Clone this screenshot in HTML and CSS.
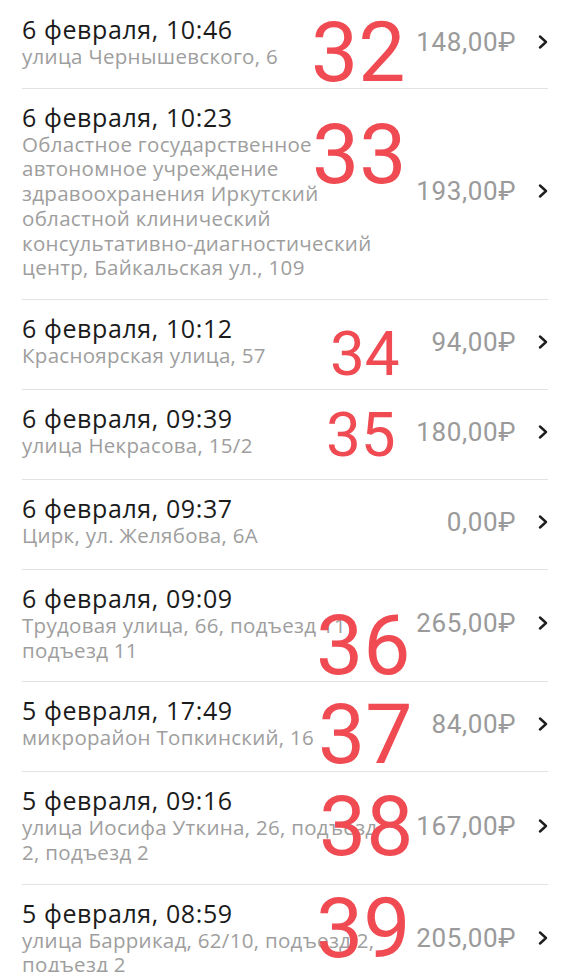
FILE: index.html
```html
<!DOCTYPE html>
<html lang="ru">
<head>
<meta charset="utf-8">
<title>Поездки</title>
<link rel="stylesheet" href="styles.css">
</head>
<body>
<ul class="trips">
  <li class="trip">
    <div class="info"><div class="date">6 февраля, 10:46</div><div class="addr">улица Чернышевского, 6</div></div>
    <div class="price">148,00₽</div>
    <svg class="chev" viewBox="0 0 10 14"><polyline points="2,1.5 8,7 2,12.5"/></svg>
    <span class="mark m32">32</span>
  </li>
  <li class="trip">
    <div class="info"><div class="date">6 февраля, 10:23</div><div class="addr">Областное государственное автономное учреждение здравоохранения Иркутский областной клинический консультативно-диагностический центр, Байкальская ул., 109</div></div>
    <div class="price">193,00₽</div>
    <svg class="chev" viewBox="0 0 10 14"><polyline points="2,1.5 8,7 2,12.5"/></svg>
    <span class="mark m33">33</span>
  </li>
  <li class="trip">
    <div class="info"><div class="date">6 февраля, 10:12</div><div class="addr">Красноярская улица, 57</div></div>
    <div class="price">94,00₽</div>
    <svg class="chev" viewBox="0 0 10 14"><polyline points="2,1.5 8,7 2,12.5"/></svg>
    <span class="mark small m34">34</span>
  </li>
  <li class="trip">
    <div class="info"><div class="date">6 февраля, 09:39</div><div class="addr">улица Некрасова, 15/2</div></div>
    <div class="price">180,00₽</div>
    <svg class="chev" viewBox="0 0 10 14"><polyline points="2,1.5 8,7 2,12.5"/></svg>
    <span class="mark small m35">35</span>
  </li>
  <li class="trip">
    <div class="info"><div class="date">6 февраля, 09:37</div><div class="addr">Цирк, ул. Желябова, 6А</div></div>
    <div class="price">0,00₽</div>
    <svg class="chev" viewBox="0 0 10 14"><polyline points="2,1.5 8,7 2,12.5"/></svg>
  </li>
  <li class="trip">
    <div class="info"><div class="date">6 февраля, 09:09</div><div class="addr">Трудовая улица, 66, подъезд 11 подъезд 11</div></div>
    <div class="price">265,00₽</div>
    <svg class="chev" viewBox="0 0 10 14"><polyline points="2,1.5 8,7 2,12.5"/></svg>
    <span class="mark m36">36</span>
  </li>
  <li class="trip">
    <div class="info"><div class="date">5 февраля, 17:49</div><div class="addr">микрорайон Топкинский, 16</div></div>
    <div class="price">84,00₽</div>
    <svg class="chev" viewBox="0 0 10 14"><polyline points="2,1.5 8,7 2,12.5"/></svg>
    <span class="mark m37">37</span>
  </li>
  <li class="trip">
    <div class="info"><div class="date">5 февраля, 09:16</div><div class="addr">улица Иосифа Уткина, 26, подъезд 2, подъезд 2</div></div>
    <div class="price">167,00₽</div>
    <svg class="chev" viewBox="0 0 10 14"><polyline points="2,1.5 8,7 2,12.5"/></svg>
    <span class="mark m38">38</span>
  </li>
  <li class="trip">
    <div class="info"><div class="date">5 февраля, 08:59</div><div class="addr">улица Баррикад, 62/10, подъезд 2, подъезд 2</div></div>
    <div class="price">205,00₽</div>
    <svg class="chev" viewBox="0 0 10 14"><polyline points="2,1.5 8,7 2,12.5"/></svg>
    <span class="mark m39">39</span>
  </li>
</ul>
</body>
</html>
```
FILE: styles.css
```css
html, body {
  margin: 0;
  padding: 0;
  background: #ffffff;
}
body {
  font-family: "Open Sans", Roboto, sans-serif;
  overflow: hidden;
  height: 972px;
}
.trips {
  list-style: none;
  margin: 0 22px;
  padding: 0;
}
.trip {
  position: relative;
  box-sizing: border-box;
  min-height: 90px;
  display: flex;
  align-items: center;
  gap: 22px;
  padding: 14px 0 19px;
  border-bottom: 1px solid #e2e2e2;
}
.trip:first-child {
  min-height: 88px;
  padding-top: 15px;
}
.info {
  flex: 1;
  min-width: 0;
  align-self: flex-start;
}
.date {
  font-size: 25px;
  line-height: 29px;
  letter-spacing: 0.6px;
  color: #1b1b1b;
}
.addr {
  font-size: 20.5px;
  line-height: 24.7px;
  letter-spacing: 0.3px;
  color: #9e9e9e;
}
.price {
  font-family: Roboto, "Open Sans", sans-serif;
  font-size: 26px;
  letter-spacing: 0.6px;
  color: #9a9a9a;
  white-space: nowrap;
}
.chev {
  width: 10px;
  height: 14px;
  flex: none;
}
.chev polyline {
  fill: none;
  stroke: #1e1e1e;
  stroke-width: 2.4;
  stroke-linecap: round;
  stroke-linejoin: round;
}
.mark {
  position: absolute;
  font-family: Roboto, sans-serif;
  font-size: 84px;
  line-height: 1;
  color: #f04a52;
}
.mark.small {
  font-size: 62px;
}
.m32 { top: 11px; left: 289px; }
.m33 { top: 24px; left: 290px; }
.m34 { top: 23px; left: 308px; }
.m35 { top: 14px; left: 304px; }
.m36 { top: 34px; left: 294px; }
.m37 { top: 11px; left: 296px; }
.m38 { top: 13px; left: 297px; }
.m39 { top: 2px; left: 294px; }
```
